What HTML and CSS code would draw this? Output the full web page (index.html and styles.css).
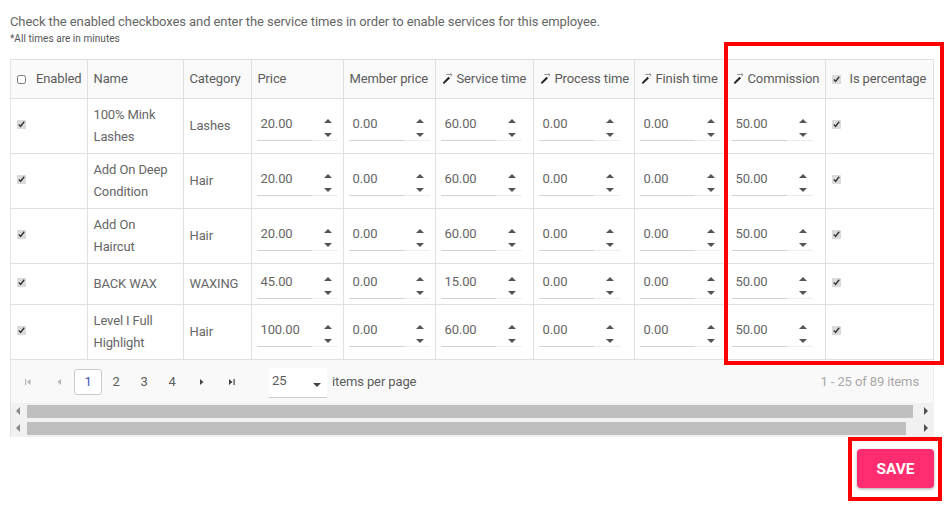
FILE: index.html
```html
<!DOCTYPE html>
<html lang="en">
<head>
<meta charset="utf-8">
<title>Employee services</title>
<link rel="stylesheet" href="styles.css">
</head>
<body>
<svg class="defs" width="0" height="0" aria-hidden="true"><defs>
<symbol id="wand" viewBox="0 0 12 12"><path d="M.8 10.6 L7 4 L8.8 5.6 L2.2 12 Z" fill="#222"/><path d="M4.6 1.6 H10.4 M9.2 .5 L11 2 L9.2 3.6" stroke="#8a8a8a" stroke-width="1" fill="none"/></symbol>
</defs></svg>
<p class="intro">Check the enabled checkboxes and enter the service times in order to enable services for this employee.</p>
<p class="note">*All times are in minutes</p>
<div class="grid">
<table>
<colgroup><col class="c1"><col class="c2"><col class="c3"><col class="c4"><col class="c5"><col class="c6"><col class="c7"><col class="c8"><col class="c9"><col class="c10"></colgroup>
<thead><tr>
<th><span class="chk-h"><input type="checkbox">Enabled</span></th><th>Name</th><th>Category</th><th>Price</th><th>Member price</th>
<th class="w"><svg class="wand"><use href="#wand"/></svg>Service time</th><th class="w"><svg class="wand"><use href="#wand"/></svg>Process time</th><th class="w"><svg class="wand"><use href="#wand"/></svg>Finish time</th><th class="w"><svg class="wand"><use href="#wand"/></svg>Commission</th>
<th><span class="chk-h pct"><input type="checkbox" checked>Is percentage</span></th>
</tr></thead>
<tbody>
<tr class="tall"><td><input type="checkbox" checked></td><td class="name">100% Mink Lashes</td><td>Lashes</td>
<td><div class="num"><span>20.00</span><i></i></div></td><td><div class="num"><span>0.00</span><i></i></div></td><td><div class="num"><span>60.00</span><i></i></div></td><td><div class="num"><span>0.00</span><i></i></div></td><td><div class="num"><span>0.00</span><i></i></div></td><td><div class="num"><span>50.00</span><i></i></div></td><td><input type="checkbox" checked></td></tr>
<tr class="tall"><td><input type="checkbox" checked></td><td class="name">Add On Deep Condition</td><td>Hair</td>
<td><div class="num"><span>20.00</span><i></i></div></td><td><div class="num"><span>0.00</span><i></i></div></td><td><div class="num"><span>60.00</span><i></i></div></td><td><div class="num"><span>0.00</span><i></i></div></td><td><div class="num"><span>0.00</span><i></i></div></td><td><div class="num"><span>50.00</span><i></i></div></td><td><input type="checkbox" checked></td></tr>
<tr class="tall"><td><input type="checkbox" checked></td><td class="name">Add On Haircut</td><td>Hair</td>
<td><div class="num"><span>20.00</span><i></i></div></td><td><div class="num"><span>0.00</span><i></i></div></td><td><div class="num"><span>60.00</span><i></i></div></td><td><div class="num"><span>0.00</span><i></i></div></td><td><div class="num"><span>0.00</span><i></i></div></td><td><div class="num"><span>50.00</span><i></i></div></td><td><input type="checkbox" checked></td></tr>
<tr class="short"><td><input type="checkbox" checked></td><td class="name">BACK WAX</td><td>WAXING</td>
<td><div class="num"><span>45.00</span><i></i></div></td><td><div class="num"><span>0.00</span><i></i></div></td><td><div class="num"><span>15.00</span><i></i></div></td><td><div class="num"><span>0.00</span><i></i></div></td><td><div class="num"><span>0.00</span><i></i></div></td><td><div class="num"><span>50.00</span><i></i></div></td><td><input type="checkbox" checked></td></tr>
<tr class="tall"><td><input type="checkbox" checked></td><td class="name">Level I Full Highlight</td><td>Hair</td>
<td><div class="num"><span>100.00</span><i></i></div></td><td><div class="num"><span>0.00</span><i></i></div></td><td><div class="num"><span>60.00</span><i></i></div></td><td><div class="num"><span>0.00</span><i></i></div></td><td><div class="num"><span>0.00</span><i></i></div></td><td><div class="num"><span>50.00</span><i></i></div></td><td><input type="checkbox" checked></td></tr>
</tbody>
</table>
<div class="pager">
<div class="pg">
<svg class="ic off" viewBox="0 0 8 8"><path d="M1 1h1.2v6H1zM6.5 1v6L3 4z"/></svg>
<svg class="ic off" viewBox="0 0 8 8"><path d="M6 1v6L2.5 4z"/></svg>
<span class="page cur">1</span><span class="page">2</span><span class="page">3</span><span class="page">4</span>
<svg class="ic" viewBox="0 0 8 8"><path d="M2 1v6L5.5 4z"/></svg>
<svg class="ic" viewBox="0 0 8 8"><path d="M1 1v6L4.5 4zM5.5 1h1.2v6H5.5z"/></svg>
</div>
<div class="size">25<b></b></div>
<span class="ipp">items per page</span>
<span class="info">1 - 25 of 89 items</span>
</div>
<div class="bar"><u class="l"></u><div class="thumb t1"></div><u class="r"></u></div>
<div class="bar"><u class="l"></u><div class="thumb t2"></div><u class="r"></u></div>
</div>
<div class="actions"><button class="save">SAVE</button></div>
<div class="mark m1"></div>
<div class="mark m2"></div>
</body>
</html>
```
FILE: styles.css
```css
*{box-sizing:border-box}
html,body{margin:0;height:521px;overflow:hidden}
body{padding:14px 10px 0 10px;background:#fff;font-family:Roboto,sans-serif;font-size:13px;color:#666;letter-spacing:-.12px;position:relative}
.defs{position:absolute}
.intro{margin:0;line-height:15px;font-size:13px;letter-spacing:-.09px}
.note{margin:4px 0 0;font-size:10px;line-height:12px;letter-spacing:.05px;color:#555}
.grid{margin-top:14px;width:924px;border-left:1px solid #e4e4e4;background:#f8f8f8}
table{border-collapse:collapse;table-layout:fixed;width:922px;background:#fff}
.c1{width:76px}.c2{width:96px}.c3{width:68px}.c4{width:92px}.c5{width:92px}.c6{width:98px}.c7{width:101px}.c8{width:92px}.c9{width:99px}.c10{width:108px}
th,td{border:1px solid #e0e0e0;padding:0 6px;font-weight:400;text-align:left;line-height:22px;vertical-align:middle}
thead tr{height:39px}
th{background:#fafafa;color:#5c5c5c;white-space:nowrap;padding-right:0}
th:first-child,td:first-child{border-left:0;padding-left:6px}
.tall{height:55px}.short{height:41px}
.wand{width:11px;height:11px;margin-right:4px;vertical-align:-1px}
.chk-h{display:flex;align-items:center;gap:10px}
.pct{gap:9px}
input[type=checkbox]{display:block;margin:0;width:9px;height:9px;accent-color:#dcdcdc}
td input[type=checkbox]{margin-top:-3px}
.num{position:relative;height:28px;padding:0 0 0 4px;line-height:22px;margin:1px 2px 0 -1px;width:81px;border-bottom:1px solid #ececec;font-size:13px}
.num::before{content:"";position:absolute;left:0;bottom:-1px;width:55px;height:1px;background:#d2d2d2}
.num i{position:absolute;right:6px;top:0;width:8px;height:28px}
.num i::before,.num i::after{content:"";position:absolute;left:0;border-left:4px solid transparent;border-right:4px solid transparent}
.num i::before{top:6px;border-bottom:4px solid #555}
.num i::after{top:20px;border-top:4px solid #555}
.pager{height:43px;display:flex;align-items:center;padding:0 14px 0 0;background:#f9f9f9;border-right:1px solid #eee;color:#5c5c5c}
.pg{display:flex;align-items:center;margin-left:13px}
.ic{width:8px;height:8px;fill:#444;flex:none}
.off{fill:#b5b5b5}
.ic:nth-child(1){margin-right:23px}
.ic:nth-child(2){margin-right:11px}
.ic:nth-last-child(2){margin-left:12px;margin-right:22px}
.page{width:28px;height:26px;line-height:24px;text-align:center;border:1px solid transparent;border-radius:3px}
.cur{color:#3f51b5;background:#fff;border-color:#ccc}
.size{position:relative;margin:2px 0 0 33px;width:58px;height:30px;line-height:26px;padding-left:3px;background:#fff;border-bottom:1px solid #ccc}
.size b{position:absolute;right:6px;top:15px;border-left:4px solid transparent;border-right:4px solid transparent;border-top:4px solid #444}
.ipp{margin-left:5px}
.info{margin-left:auto;color:#a8a8a8}
.bar{height:17px;display:flex;align-items:center;background:#f1f1f1;position:relative;padding:0 0 0 16px}
.thumb{height:13px;background:#bfbfbf}
.t1{width:886px}.t2{width:879px}
.bar u{position:absolute;top:4px;border-top:4px solid transparent;border-bottom:4px solid transparent}
.bar .l{left:5px;border-right:4px solid #8a8a8a}
.bar .r{right:6px;border-left:4px solid #505050}
.actions{display:flex;justify-content:flex-end;margin-top:12px;width:924px}
.save{width:77px;height:39px;border:0;border-radius:4px;background:#ff2d6f;color:#fff;font:700 15.5px Roboto,sans-serif;box-shadow:0 1px 3px rgba(0,0,0,.35)}
.mark{position:absolute;border:4px solid #f00;pointer-events:none}
.m1{left:724px;top:42px;width:220px;height:323px}
.m2{left:848px;top:437px;width:94px;height:64px}
```
